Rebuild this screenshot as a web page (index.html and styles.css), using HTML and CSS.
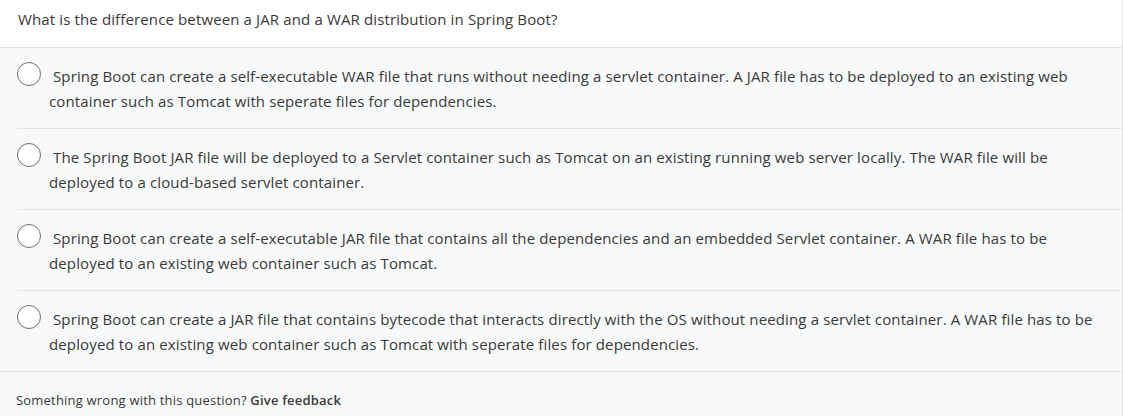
FILE: index.html
```html
<!DOCTYPE html>
<html lang="en">
<head>
<meta charset="utf-8">
<title>Quiz question</title>
<link rel="stylesheet" href="styles.css">
</head>
<body>
<div class="quiz">
  <div class="question">What is the difference between a JAR and a WAR distribution in Spring Boot?</div>
  <div class="options">
    <label class="option"><span class="radio"></span><span class="text">Spring Boot can create a self-executable WAR file that runs without needing a servlet container. A JAR file has to be deployed to an existing web container such as Tomcat with seperate files for dependencies.</span></label>
    <label class="option"><span class="radio"></span><span class="text">The Spring Boot JAR file will be deployed to a Servlet container such as Tomcat on an existing running web server locally. The WAR file will be deployed to a cloud-based servlet container.</span></label>
    <label class="option"><span class="radio"></span><span class="text">Spring Boot can create a self-executable JAR file that contains all the dependencies and an embedded Servlet container. A WAR file has to be deployed to an existing web container such as Tomcat.</span></label>
    <label class="option"><span class="radio"></span><span class="text">Spring Boot can create a JAR file that contains bytecode that interacts directly with the OS without needing a servlet container. A WAR file has to be deployed to an existing web container such as Tomcat with seperate files for dependencies.</span></label>
  </div>
  <div class="footer">Something wrong with this question? <b>Give feedback</b></div>
</div>
</body>
</html>
```

FILE: styles.css
```css
html, body {
  margin: 0;
  padding: 0;
  background: #ffffff;
}
body {
  font-family: "Open Sans", "Noto Sans", sans-serif;
  color: #393939;
  width: 1123px;
  height: 416px;
  overflow: hidden;
}
.quiz {
  display: flex;
  flex-direction: column;
  border-right: 1px solid #e3e4e6;
  height: 416px;
  box-sizing: border-box;
}
.question {
  height: 48px;
  box-sizing: border-box;
  padding: 9px 18px 0;
  font-size: 15px;
  letter-spacing: 0.13px;
  line-height: 20px;
  border-bottom: 1px solid #e3e4e6;
  background: #ffffff;
}
.options {
  background: #f8f9fa;
  padding-left: 17px;
}
.option {
  display: flex;
  align-items: flex-start;
  gap: 8px;
  height: 64px;
  padding: 16px 20px 0 0;
  border-bottom: 1px solid #e3e4e6;
}
.option:last-child {
  border-bottom: none;
}
.radio {
  flex: none;
  width: 24px;
  height: 24px;
  margin-top: -2px;
  box-sizing: border-box;
  border: 1.5px solid #6f6f6f;
  border-radius: 50%;
  background: #ffffff;
}
.text {
  font-size: 15px;
  letter-spacing: 0.13px;
  line-height: 25px;
  text-indent: 4px;
}
.footer {
  flex: 1;
  background: #f8f9fa;
  border-top: 1px solid #e3e4e6;
  padding: 19px 16px 0;
  font-size: 13px;
  letter-spacing: 0.2px;
  line-height: 18px;
}
.footer b {
  font-weight: 600;
}
```
